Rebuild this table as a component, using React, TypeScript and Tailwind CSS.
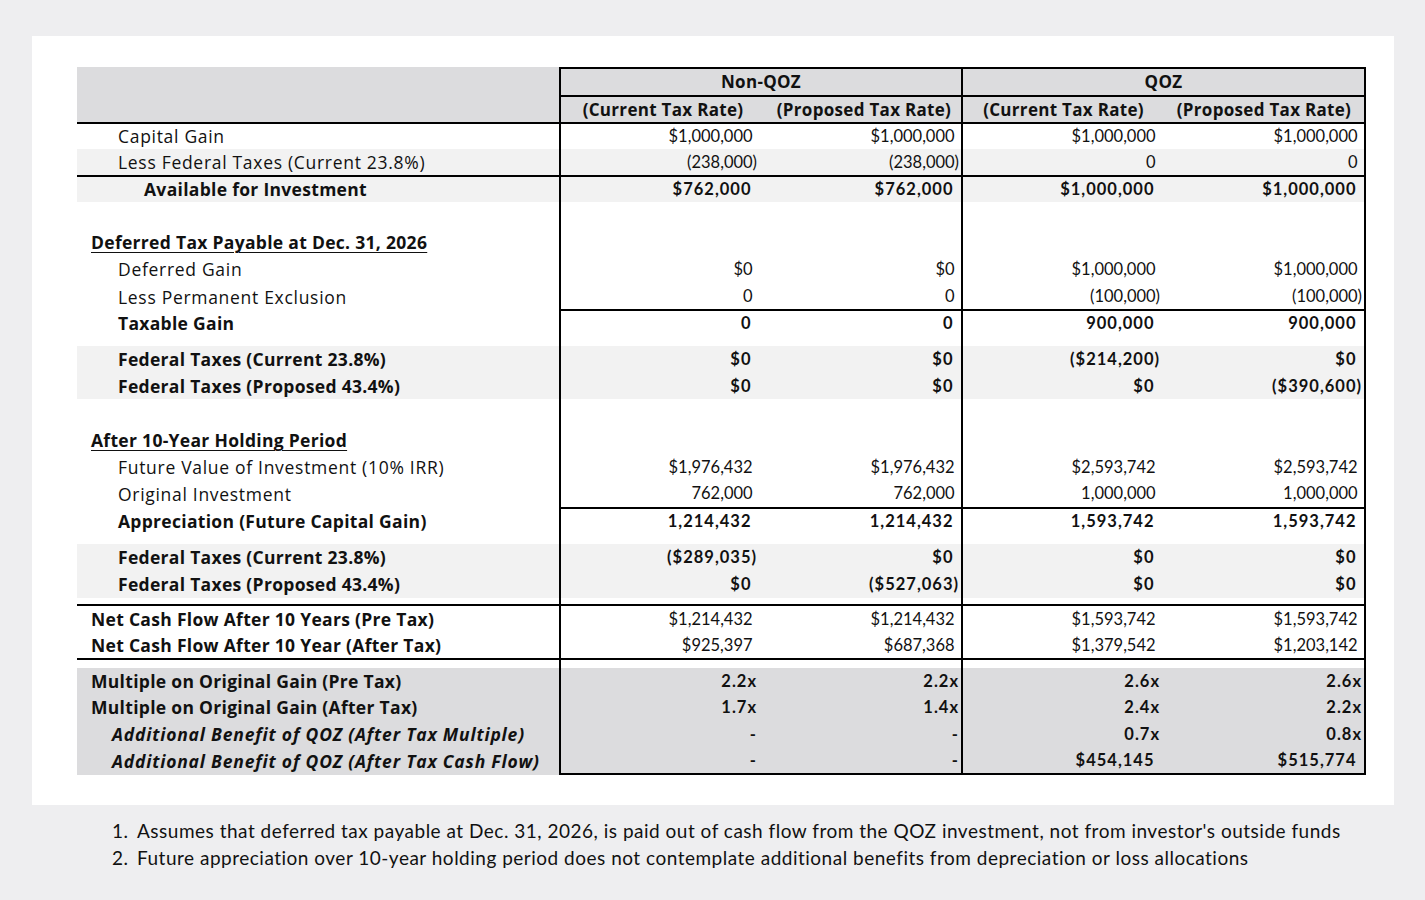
import React from 'react';

type Row = {
  label?: string;
  indent?: number;
  bold?: boolean;
  italic?: boolean;
  underline?: boolean;
  values?: string[];
  valBold?: boolean;
  h: number;
  bg?: 'light' | 'dark';
  line?: 'full' | 'nums';
};

const rows: Row[] = [
  { label: 'Capital Gain', indent: 41, values: ['$1,000,000', '$1,000,000', '$1,000,000', '$1,000,000'], h: 25 },
  { label: 'Less Federal Taxes (Current 23.8%)', indent: 41, values: ['(238,000)', '(238,000)', '0', '0'], h: 28, bg: 'light', line: 'full' },
  { label: 'Available for Investment', indent: 67, bold: true, values: ['$762,000', '$762,000', '$1,000,000', '$1,000,000'], h: 25, bg: 'light' },
  { h: 27 },
  { label: 'Deferred Tax Payable at Dec. 31, 2026', indent: 14, bold: true, underline: true, h: 27 },
  { label: 'Deferred Gain', indent: 41, values: ['$0', '$0', '$1,000,000', '$1,000,000'], h: 27 },
  { label: 'Less Permanent Exclusion', indent: 41, values: ['0', '0', '(100,000)', '(100,000)'], h: 28, line: 'nums' },
  { label: 'Taxable Gain', indent: 41, bold: true, values: ['0', '0', '900,000', '900,000'], h: 25 },
  { h: 10 },
  { label: 'Federal Taxes (Current 23.8%)', indent: 41, bold: true, values: ['$0', '$0', '($214,200)', '$0'], h: 27, bg: 'light' },
  { label: 'Federal Taxes (Proposed 43.4%)', indent: 41, bold: true, values: ['$0', '$0', '$0', '($390,600)'], h: 26, bg: 'light' },
  { h: 28 },
  { label: 'After 10-Year Holding Period', indent: 14, bold: true, underline: true, h: 27 },
  { label: 'Future Value of Investment (10% IRR)', indent: 41, values: ['$1,976,432', '$1,976,432', '$2,593,742', '$2,593,742'], h: 26 },
  { label: 'Original Investment', indent: 41, values: ['762,000', '762,000', '1,000,000', '1,000,000'], h: 29, line: 'nums' },
  { label: 'Appreciation (Future Capital Gain)', indent: 41, bold: true, values: ['1,214,432', '1,214,432', '1,593,742', '1,593,742'], h: 25 },
  { h: 10 },
  { label: 'Federal Taxes (Current 23.8%)', indent: 41, bold: true, values: ['($289,035)', '$0', '$0', '$0'], h: 27, bg: 'light' },
  { label: 'Federal Taxes (Proposed 43.4%)', indent: 41, bold: true, values: ['$0', '($527,063)', '$0', '$0'], h: 27, bg: 'light' },
  { h: 8, line: 'full' },
  { label: 'Net Cash Flow After 10 Years (Pre Tax)', indent: 14, bold: true, valBold: false, values: ['$1,214,432', '$1,214,432', '$1,593,742', '$1,593,742'], h: 26 },
  { label: 'Net Cash Flow After 10 Year (After Tax)', indent: 14, bold: true, valBold: false, values: ['$925,397', '$687,368', '$1,379,542', '$1,203,142'], h: 28, line: 'full' },
  { h: 8 },
  { label: 'Multiple on Original Gain (Pre Tax)', indent: 14, bold: true, values: ['2.2x', '2.2x', '2.6x', '2.6x'], h: 26, bg: 'dark' },
  { label: 'Multiple on Original Gain (After Tax)', indent: 14, bold: true, values: ['1.7x', '1.4x', '2.4x', '2.2x'], h: 27, bg: 'dark' },
  { label: 'Additional Benefit of QOZ (After Tax Multiple)', indent: 35, bold: true, italic: true, values: ['-', '-', '0.7x', '0.8x'], h: 26, bg: 'dark' },
  { label: 'Additional Benefit of QOZ (After Tax Cash Flow)', indent: 35, bold: true, italic: true, values: ['-', '-', '$454,145', '$515,774'], h: 28, bg: 'dark', line: 'nums' },
];

// column widths include the thick rules
const colCls = [
  'w-[202px] border-l-2 border-black pr-[4px]',
  'w-[200px] pr-[2px]',
  'w-[203px] border-l-2 border-black pr-[4px]',
  'w-[202px] border-r-2 border-black pr-[2px]',
];

const bgCls = { light: 'bg-[#f2f2f2]', dark: 'bg-[#dcdcde]' };

function Value({ v }: { v: string }) {
  // accounting format: leave room for a closing paren on positive numbers
  const pad = !(v.endsWith(')') || v.endsWith('x') || v === '-');
  return (
    <span>
      {v}
      {pad && <span className="invisible">)</span>}
    </span>
  );
}

function TableRow({ row }: { row: Row }) {
  const bg = row.bg ? bgCls[row.bg] : '';
  const line = row.line ? 'border-b-2 border-b-black' : '';
  const valBold = row.valBold ?? row.bold;
  let labelCls = 'tracking-[0.7px]';
  if (row.bold) labelCls = 'font-bold tracking-[0.3px]';
  if (row.italic) labelCls = 'font-bold italic tracking-[0.8px]';
  return (
    <div className="flex" style={{ height: row.h }}>
      <div
        className={`w-[482px] flex items-center text-[17.5px] text-[#111] whitespace-nowrap ${bg} ${row.line === 'full' ? line : ''} ${labelCls}`}
        style={{ paddingLeft: row.indent ?? 0 }}
      >
        {row.label && (
          <span className={row.underline ? 'underline underline-offset-[3px] decoration-1' : ''}>{row.label}</span>
        )}
      </div>
      {colCls.map((c, i) => (
        <div
          key={i}
          className={`${c} ${bg} ${line} flex items-center justify-end font-['Lato',sans-serif] text-[16.5px] text-[#111] ${valBold ? 'font-bold tracking-[1px]' : ''}`}
        >
          {row.values && <Value v={row.values[i]} />}
        </div>
      ))}
    </div>
  );
}

export default function App() {
  return (
    <div className="min-h-[900px] bg-[#eeeef0] pt-[36px] font-['Open_Sans',sans-serif]">
      <div className="ml-[32px] w-[1362px] h-[769px] bg-white pt-[31px] pl-[45px]">
        <div className="w-[1289px]">
          {/* group header */}
          <div className="flex h-[30px] bg-[#dcdcde] text-[17px] font-bold tracking-[0.3px] text-[#111]">
            <div className="w-[482px]" />
            <div className="w-[402px] border-l-2 border-t-2 border-b-2 border-black flex items-center justify-center">Non-QOZ</div>
            <div className="w-[405px] border-l-2 border-r-2 border-t-2 border-b-2 border-black flex items-center justify-center">QOZ</div>
          </div>
          <div className="flex h-[27px] bg-[#dcdcde] text-[17px] font-bold tracking-[0.3px] text-[#111] border-b-2 border-black whitespace-nowrap">
            <div className="w-[482px]" />
            <div className="w-[202px] border-l-2 border-black flex items-center justify-center pl-[4px]">(Current Tax Rate)</div>
            <div className="w-[200px] flex items-center justify-center pl-[6px]">(Proposed Tax Rate)</div>
            <div className="w-[203px] border-l-2 border-black flex items-center justify-center">(Current Tax Rate)</div>
            <div className="w-[202px] border-r-2 border-black flex items-center justify-center">(Proposed Tax Rate)</div>
          </div>
          {rows.map((r, i) => (
            <TableRow key={i} row={r} />
          ))}
        </div>
      </div>

      {/* footnotes */}
      <div className="pl-[112px] pt-[12px] font-['Lato',sans-serif] text-[19px] tracking-[0.5px] text-[#111] leading-[27px]">
        <div className="flex">
          <span className="w-[25px]">1.</span>
          <span>Assumes that deferred tax payable at Dec. 31, 2026, is paid out of cash flow from the QOZ investment, not from investor's outside funds</span>
        </div>
        <div className="flex">
          <span className="w-[25px]">2.</span>
          <span>Future appreciation over 10-year holding period does not contemplate additional benefits from depreciation or loss allocations</span>
        </div>
      </div>
    </div>
  );
}
